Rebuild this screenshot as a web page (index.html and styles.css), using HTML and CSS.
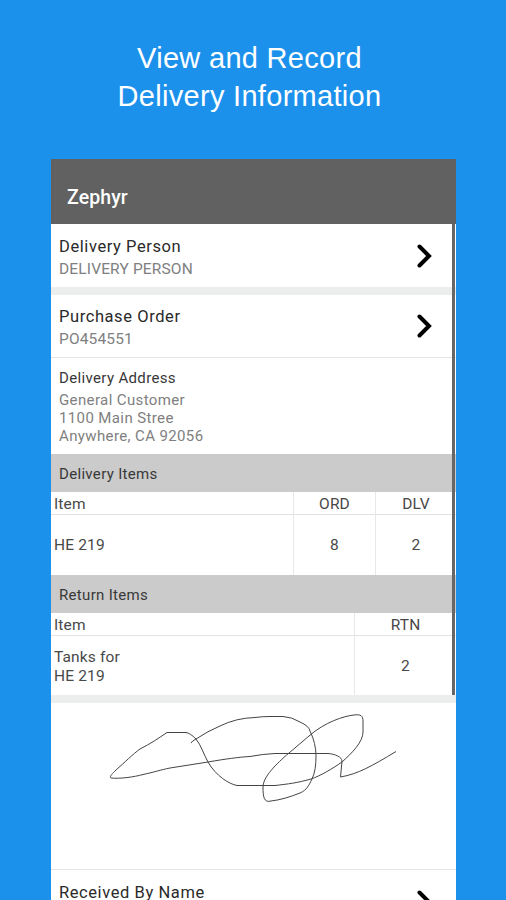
FILE: index.html
```html
<!DOCTYPE html>
<html lang="en">
<head>
    <meta charset="UTF-8">
    <title>Zephyr</title>
    <link rel="stylesheet" href="styles.css">
</head>
<body>

<h1>View and Record<br>Delivery Information</h1>

<div class="phone">
    <div class="appbar">Zephyr</div>

    <!-- Order details -->
    <div class="content">
        <div class="row person">
            <div>
                <div class="title">Delivery Person</div>
                <div class="value">DELIVERY PERSON</div>
            </div>
            <svg class="chevron" viewBox="0 0 16 24"><path d="M2.5 2.5 L12 12 L2.5 21.5"/></svg>
        </div>
        <div class="gap"></div>
        <div class="row order">
            <div>
                <div class="title">Purchase Order</div>
                <div class="value">PO454551</div>
            </div>
            <svg class="chevron" viewBox="0 0 16 24"><path d="M2.5 2.5 L12 12 L2.5 21.5"/></svg>
        </div>
        <div class="address">
            <div class="label">Delivery Address</div>
            <div class="lines">General Customer<br>1100 Main Stree<br>Anywhere, CA 92056</div>
        </div>

        <h2>Delivery Items</h2>
        <table>
            <tr><th>Item</th><th class="ord">ORD</th><th class="dlv">DLV</th></tr>
            <tr class="item"><td>HE 219</td><td>8</td><td>2</td></tr>
        </table>

        <h2>Return Items</h2>
        <table class="returns">
            <tr><th>Item</th><th class="rtn">RTN</th></tr>
            <tr class="item"><td>Tanks for<br>HE 219</td><td>2</td></tr>
        </table>
        <div class="scrollbar"></div>
    </div>
    <div class="gap"></div>

    <!-- Signature -->
    <svg class="signature" viewBox="51 703 405 166">
        <path d="M191 743 Q192 741 196 739 Q208 731 220 726 Q236 718 255 717.5 Q262 716.5 270 716.5 H283 Q292 717 300 722 Q309 726 310 731 C314 739 316 748 316 756 C316 765 315 773 312 779 C309 785 307 790 300 793 C290 797 280 800 271 801 C264 803 263 797 263 787 C263 777 276 764 289 753 L309 736 C325 722 344 716 354 715 C361 714 363 716 363 721 V732 C363 742 352 753 342 762 C332 769 320 776 311 779 C297 783 288 784 275 785.5 H237 C229 784 216 776 208 762 C204 755 201 745 196 739 C192 735 189 733 186 732.5 H167 C159 738 150 744 140 749 C133 754 124 763 116 770 C112 774 109 777 111 778 C120 779 134 777 143 774.5 C155 772 160 770 170 768 L208 762 C225 759 240 757 250 756.5 Q263 754 275 753.5 H328 C335 754 342 757 342 761 L340.5 777 C358 774 372 766 396 751.5"/>
    </svg>

    <div class="row received">
        <div class="title">Received By Name</div>
        <svg class="chevron" viewBox="0 0 16 24"><path d="M2.5 2.5 L12 12 L2.5 21.5"/></svg>
    </div>
</div>

</body>
</html>
```
FILE: styles.css
```css
* { box-sizing: border-box; }
html { height: 100%; overflow: hidden; }
body {
    height: 900px;
    margin: 0;
    overflow: hidden;
    background: #1c91ec;
    font-family: Roboto, sans-serif;
}
h1 {
    height: 159px;
    margin: 0;
    padding: 39px 7px 0 0;
    color: #fff;
    font: 29px/38px "Liberation Sans", Arial, sans-serif;
    letter-spacing: 0.3px;
    text-align: center;
}

.phone { width: 405px; margin-left: 51px; background: #fff; }
.appbar {
    height: 65px;
    padding: 27px 16px 0;
    background: #616161;
    color: #fff;
    font-size: 19.5px;
    font-weight: 500;
    line-height: 24px;
    letter-spacing: 0.1px;
}
.content { position: relative; }
.scrollbar {
    position: absolute;
    top: 0;
    right: 1px;
    bottom: 0;
    width: 3px;
    background: #666;
}

.row {
    display: flex;
    justify-content: space-between;
    padding: 12px 23px 0 8px;
}
.person { height: 63px; }
.order { height: 63px; padding-top: 11px; border-bottom: 1px solid #e4e4e4; }
.title { color: #2a2a2a; font-size: 16.5px; line-height: 21px; letter-spacing: 0.58px; }
.value { color: #808080; font-size: 15.5px; line-height: 24px; letter-spacing: 0.15px; }
.chevron { width: 16px; height: 24px; margin-top: 8px; }
.chevron path { fill: none; stroke: #000; stroke-width: 4; stroke-linecap: round; }
.gap { height: 8px; background: #eceeee; }

.address { height: 96px; padding: 10px 8px 0; }
.label { color: #383838; font-size: 15px; line-height: 21px; letter-spacing: 0.35px; }
.lines { padding-top: 1.5px; color: #808080; font-size: 15px; line-height: 18.4px; letter-spacing: 0.38px; }

h2 {
    height: 38px;
    margin: 0;
    padding: 1px 0 0 8px;
    background: #cbcbcb;
    color: #383838;
    font-size: 15px;
    font-weight: 400;
    line-height: 39px;
    letter-spacing: 0.32px;
}
table {
    width: 100%;
    table-layout: fixed;
    border-collapse: separate;
    border-spacing: 0;
    color: #484848;
    font-size: 15.5px;
    line-height: 18.4px;
    letter-spacing: 0.15px;
}
th { height: 23px; padding: 2px 0 0; border-bottom: 1px solid #e2e2e2; font-weight: 400; }
td { height: 60px; padding: 1px 0 0; }
th + th, td + td { border-left: 1px solid #e8e8e8; text-align: center; }
th:first-child, td:first-child { padding-left: 3px; text-align: left; }
.ord { width: 82px; }
.dlv { width: 81px; }
.rtn { width: 102px; }
.returns td { height: 59px; padding-top: 2px; }

.signature { display: block; width: 405px; height: 166px; }
.signature path { fill: none; stroke: #444; stroke-width: 1; }
.received { height: 31px; border-top: 1px solid #e4e4e4; overflow: hidden; }
```
